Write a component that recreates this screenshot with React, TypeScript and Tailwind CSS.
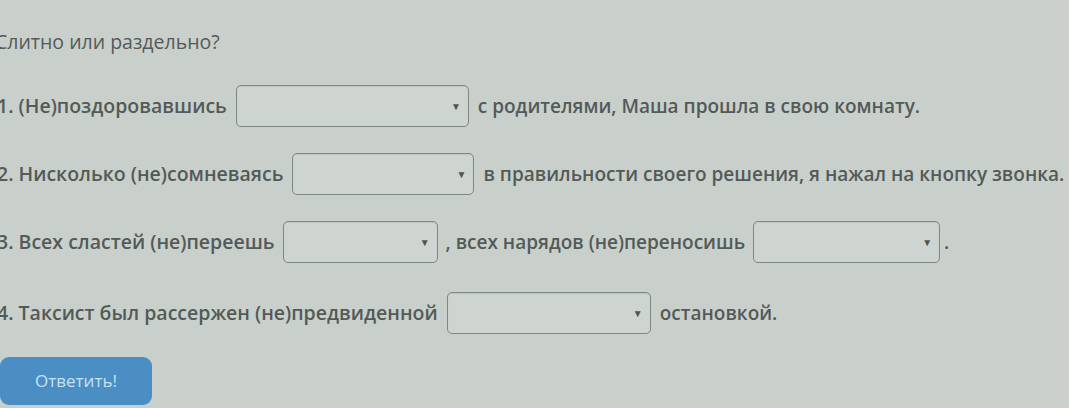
import React from 'react'

function Pick({ width }: { width: string }) {
  return (
    <div
      className={`${width} h-[42px] shrink-0 rounded-[5px] border-[1.5px] border-[#7f8784] bg-[#ced5d1] flex items-center justify-end pr-[7px] shadow-[inset_0_1px_1px_rgba(0,0,0,0.08)]`}
    >
      <span className="text-[10px] leading-none text-[#4f5553]">▼</span>
    </div>
  )
}

export default function App() {
  return (
    <div className="w-[1069px] h-[408px] overflow-hidden bg-[#c9d0cb] font-['Open_Sans',sans-serif] text-[#535a58]">
      <div className="-ml-[3px] pt-[28px]">
        <div className="-ml-[2px] text-[19.5px] leading-[28px] font-normal whitespace-nowrap">Слитно или раздельно?</div>

        <div className="flex flex-col gap-[26px] mt-[29px] font-semibold text-[19px] whitespace-nowrap">
          <div className="flex items-center gap-[9px]">
            <span className="text-[19.5px]">1. (Не)поздоровавшись</span>
            <Pick width="w-[233px]" />
            <span>с родителями, Маша прошла в свою комнату.</span>
          </div>

          <div className="flex items-center gap-[9px]">
            <span className="text-[19.5px]">2. Нисколько (не)сомневаясь</span>
            <Pick width="w-[182px]" />
            <span>в правильности своего решения, я нажал на кнопку звонка.</span>
          </div>

          <div className="flex items-center gap-[8px]">
            <span className="text-[19.5px]">3. Всех сластей (не)переешь</span>
            <Pick width="w-[155px]" />
            <span>, всех нарядов (не)переносишь</span>
            <Pick width="w-[187px]" />
            <span className="-ml-[4px]">.</span>
          </div>

          <div className="flex items-center gap-[9px] mt-[3px]">
            <span className="text-[19.5px]">4. Таксист был рассержен (не)предвиденной</span>
            <Pick width="w-[204px]" />
            <span>остановкой.</span>
          </div>
        </div>

        <button className="mt-[23px] ml-[3px] w-[152px] h-[48px] rounded-[9px] bg-[#4a8ec3] text-[17px] text-[#c4e2f6] font-normal">
          Ответить!
        </button>
      </div>
    </div>
  )
}
